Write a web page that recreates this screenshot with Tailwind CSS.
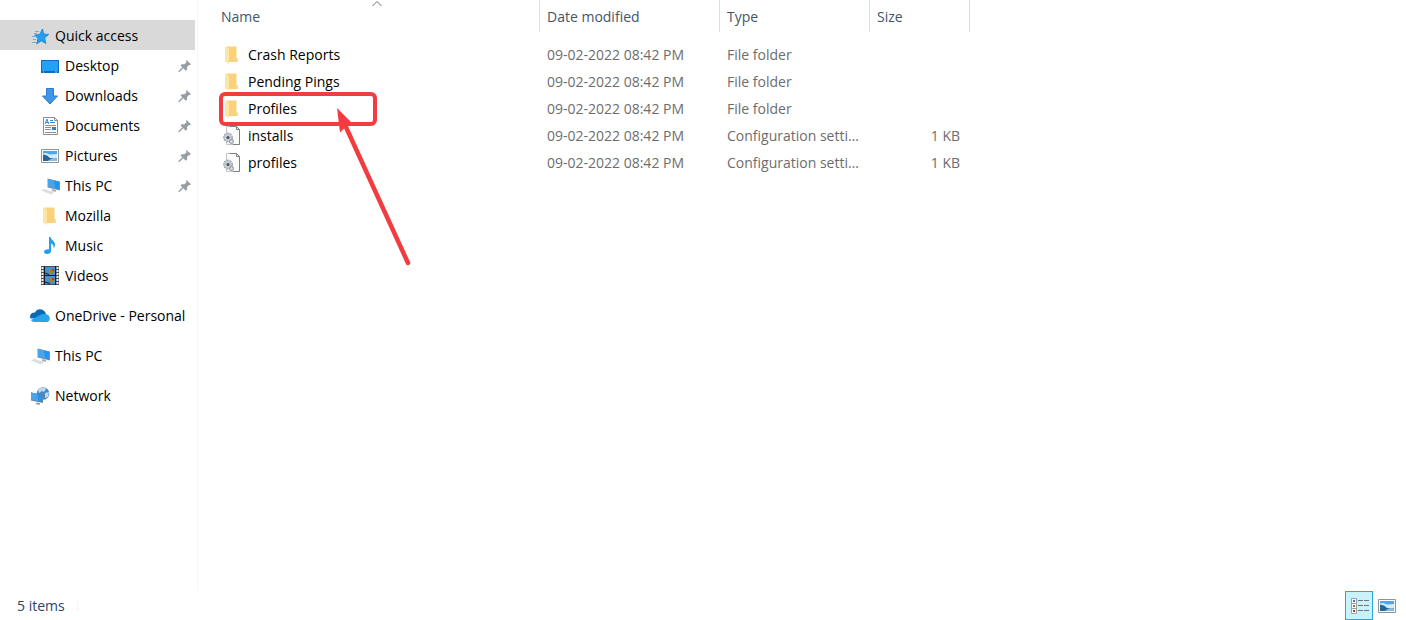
<!DOCTYPE html>
<html lang="en">
<head>
  <meta charset="UTF-8">
  <meta name="viewport" content="width=device-width, initial-scale=1.0">
  <title>File Explorer</title>
  <script src="https://cdn.jsdelivr.net/npm/@tailwindcss/browser@4"></script>
</head>
<body class="flex flex-col h-screen overflow-hidden bg-white text-black text-sm font-['Open_Sans','Noto_Sans',sans-serif]">

  <!-- Shared icons -->
  <svg class="hidden" aria-hidden="true">
    <symbol id="star" viewBox="0 0 20 20">
      <path d="M12.500 3l1.300 5 5 .4-4.200 3.500 1.300 5.600-4.600-2.600-4.700 3 1.400-5.300-3.300-3.600 4.900-.6z" fill="#259df0" stroke="#1878c4" stroke-width=".7"/>
      <path d="M5 5.500h4M4 7.500h3M2 10.500h3M3 13.500h3M2 16.500h4" stroke="#6db0e0"/>
    </symbol>
    <symbol id="desktop" viewBox="0 0 20 20">
      <path d="M1 4h18v13H1z" fill="#0f6cbd"/>
      <path d="M2 5h16v10H2z" fill="#22a2f4"/>
      <path d="M3 16h1M15 16h2" stroke="#9ad4fa"/>
    </symbol>
    <symbol id="download" viewBox="0 0 20 20">
      <path d="M6.500 2.500h7V10h4L10 18 2.500 10h4z" fill="#4095e6" stroke="#2b7cd0"/>
    </symbol>
    <symbol id="document" viewBox="0 0 20 20">
      <path d="M3.500 1.500h11l3 3v14h-14z" fill="#fff" stroke="#8b8f94"/>
      <path d="M14.500 1.500v3h3" fill="none" stroke="#8b8f94"/>
      <path d="M5 8l2-5 1.500 5M6 6.500h2.500M10 4.500h3M10 6.500h5" stroke="#3b8ad8" fill="none"/>
      <path d="M5 9.500h11M5 11.500h6M5 13.500h6M5 16.500h11" stroke="#8b8f94"/>
      <path d="M12 11h4v3h-4z" fill="#2f7fcc"/>
    </symbol>
    <symbol id="picture" viewBox="0 0 20 20">
      <path d="M1.500 3.500h17v13h-17z" fill="#fff" stroke="#8f9499"/>
      <path d="M3 5h14v10H3z" fill="#4ea6f0"/>
      <path d="M3 7.500l3-.5 4 1.500 7-.5v4H3z" fill="#d5ebf9"/>
      <path d="M3 8.500l4 1 3 2.500 7 1v2H3z" fill="#2b6596"/>
      <path d="M9 14l4-2 4 .5V15H8z" fill="#86bde2"/>
    </symbol>
    <symbol id="pc" viewBox="0 0 20 20">
      <path d="M7.500 2.500l12.500 3v9L7.500 11.500z" fill="#84919d"/>
      <path d="M8 3l11 2.700v7.500L8 10.500z" fill="#2196f0"/>
      <path d="M8 3l5.500 1.300 2 8L8 10.500z" fill="#4ba3ea"/>
      <path d="M12.500 13l4 1-1 2-4-1.200z" fill="#a9b1b8"/>
      <path d="M1 14.500l3-1.500 10 3-3 2.500z" fill="#d2d6d9"/>
      <path d="M2 15l9 2.500M3.500 14l8.500 2.500" stroke="#fff" stroke-width=".6" stroke-dasharray="1 1"/>
    </symbol>
    <symbol id="folder" viewBox="0 0 20 20">
      <path d="M4 1.500h10.500V13H16v4H7z" fill="#fad27c"/>
      <path d="M3 2h2.500l1.500 2V19l-4-2.500z" fill="#fde5a6"/>
      <path d="M14.500 13H16v4h-1.500z" fill="#fbdc96"/>
    </symbol>
    <symbol id="music" viewBox="0 0 20 20">
      <path d="M9 1h1.500c.5 3 4.500 4 4.500 7.500 0 1.500-.5 2.500-1.500 3.500.3-3-1-4-2.500-4.500v7.500c0 2-1.800 3-3.800 3C5.500 18 4 17.200 4 15.800 4 14 6.500 13 9 13.400z" fill="#229df0"/>
    </symbol>
    <symbol id="video" viewBox="0 0 20 20">
      <path d="M1 0h18v19H1z" fill="#4a4d57"/>
      <path d="M2.500 1v18M17.500 1v18" stroke="#f0f1f3" stroke-width="2" stroke-dasharray="2 1"/>
      <path d="M5 1h10v8H5zM5 10h10v8H5z" fill="#3f93dc"/>
      <path d="M9 4l2-1.500L14 3v3l-3 2-2-1zM9 13l2-1.500 3 .5v3l-3 2-2-1z" fill="#a88420"/>
      <path d="M12 3h2v2h-2zM12 12h2v2h-2z" fill="#c4352c"/>
      <path d="M4.500 0v19M15.500 0v19M5 9.500h10M5 7l4 1.500M5 16l5 1.500" stroke="#181a22"/>
    </symbol>
    <symbol id="cloud" viewBox="0 0 20 20">
      <path d="M.5 12.500C-1 8.500 2 6.500 5 6.500 7 2 14 2 16 8l-4 4z" fill="#0869b8"/>
      <path d="M1 14l9-5c2-1.300 4-1.300 6-.8C21 9 21 16 16.500 16H4.500c-2 0-3-1-3.500-2z" fill="#28a3ee"/>
    </symbol>
    <symbol id="network" viewBox="0 0 20 20">
      <circle cx="13" cy="7.500" r="6.300" fill="#4d87bf"/>
      <path d="M8 4c3-3 6-3 8-1l-2 3-2-1-3 2zM15 7l4-1-1 5-3 1z" fill="#bcd8ee"/>
      <path d="M1 6.500l12 2.500v8L1 14.500z" fill="#71808e"/>
      <path d="M1 6.500l11 2.500v7L1 13.500z" fill="#2196f0"/>
      <path d="M1 6.500l6 1.300 1.500 7.500L1 13.500z" fill="#4ba3ea"/>
      <path d="M7 16.500l3 .7-.5 1.800-4-1z" fill="#8796a4"/>
    </symbol>
    <symbol id="config" viewBox="0 0 20 20">
      <path d="M4.500.5h10l3 3v15h-13z" fill="#fbfbfa" stroke="#c3c5c7"/>
      <path d="M8 .5h6.500l3 3v15H11M14.500.5v3h3" fill="none" stroke="#7d8084"/>
      <circle cx="6" cy="11.500" r="4.200" fill="#c7ccd3" stroke="#a3abb5" stroke-width="1.600" stroke-dasharray="2 1"/>
      <circle cx="6" cy="11.500" r="3.300" fill="#c7ccd3"/>
      <circle cx="6" cy="11.500" r="1.500" fill="#4a5260"/>
      <circle cx="9.500" cy="15.500" r="2" fill="#d5d9de" stroke="#8b939d"/>
    </symbol>
    <symbol id="pin" viewBox="0 0 14 14">
      <path d="M8.500 1L13 5.200l-1 .9-1-.2-2 2.100.2 2.600-1.400 1.200L2.500 6.500l1.200-1.300 2.700.1L8.500 3.200 8 2z" fill="#979da3"/>
      <path d="M5 8.500L.8 12.800" stroke="#979da3" stroke-width="1.300"/>
    </symbol>
  </svg>

  <div class="flex flex-1 min-h-0">

    <!-- Navigation pane -->
    <nav class="w-[198px] shrink-0 pt-5 pr-0.5 border-r border-[#f8f6f0]">
      <a href="#" class="flex items-center gap-[5px] h-[30px] pl-[30px] pt-px bg-[#d9d9d9]"><svg class="size-5"><use href="#star"/></svg>Quick access</a>
      <ul class="mb-2.5">
        <li><a href="#" class="flex items-center gap-[5px] h-[30px] pt-px pl-10 pr-[3px]"><svg class="size-5"><use href="#desktop"/></svg>Desktop<svg class="size-3.5 ml-auto"><use href="#pin"/></svg></a></li>
        <li><a href="#" class="flex items-center gap-[5px] h-[30px] pt-px pl-10 pr-[3px]"><svg class="size-5"><use href="#download"/></svg>Downloads<svg class="size-3.5 ml-auto"><use href="#pin"/></svg></a></li>
        <li><a href="#" class="flex items-center gap-[5px] h-[30px] pt-px pl-10 pr-[3px]"><svg class="size-5"><use href="#document"/></svg>Documents<svg class="size-3.5 ml-auto"><use href="#pin"/></svg></a></li>
        <li><a href="#" class="flex items-center gap-[5px] h-[30px] pt-px pl-10 pr-[3px]"><svg class="size-5"><use href="#picture"/></svg>Pictures<svg class="size-3.5 ml-auto"><use href="#pin"/></svg></a></li>
        <li><a href="#" class="flex items-center gap-[5px] h-[30px] pt-px pl-10 pr-[3px]"><svg class="size-5"><use href="#pc"/></svg>This PC<svg class="size-3.5 ml-auto"><use href="#pin"/></svg></a></li>
        <li><a href="#" class="flex items-center gap-[5px] h-[30px] pt-px pl-10 pr-[3px]"><svg class="size-5"><use href="#folder"/></svg>Mozilla</a></li>
        <li><a href="#" class="flex items-center gap-[5px] h-[30px] pt-px pl-10 pr-[3px]"><svg class="size-5"><use href="#music"/></svg>Music</a></li>
        <li><a href="#" class="flex items-center gap-[5px] h-[30px] pt-px pl-10 pr-[3px]"><svg class="size-5"><use href="#video"/></svg>Videos</a></li>
      </ul>
      <div class="flex flex-col gap-2.5">
        <a href="#" class="flex items-center gap-[5px] h-[30px] pt-px pl-[30px] whitespace-nowrap"><svg class="size-5 shrink-0"><use href="#cloud"/></svg>OneDrive - Personal</a>
        <a href="#" class="flex items-center gap-[5px] h-[30px] pt-px pl-[30px]"><svg class="size-5"><use href="#pc"/></svg>This PC</a>
        <a href="#" class="flex items-center gap-[5px] h-[30px] pt-px pl-[30px]"><svg class="size-5"><use href="#network"/></svg>Network</a>
      </div>
    </nav>

    <!-- File list -->
    <main class="flex-1 min-w-0">
      <table class="table-fixed w-[772px] text-[#6d6d6d]">
        <thead class="text-[#43546b]">
          <tr>
            <th class="w-[342px] p-0 pb-[9px] font-normal">
              <button class="relative flex items-center w-full h-8 pt-0.5 pl-[23px] border-r border-[#dedede]">
                Name
                <svg class="absolute top-0 left-[173px] w-3 h-2" viewBox="0 0 12 8" fill="none" stroke="#6a7078"><path d="M1.500 6L6 1.500 10.500 6"/></svg>
              </button>
            </th>
            <th class="w-[180px] p-0 pb-[9px] font-normal"><button class="flex items-center w-full h-8 pt-0.5 pl-[7px] border-r border-[#dedede]">Date modified</button></th>
            <th class="w-[150px] p-0 pb-[9px] font-normal"><button class="flex items-center w-full h-8 pt-0.5 pl-[7px] border-r border-[#dedede]">Type</button></th>
            <th class="w-[100px] p-0 pb-[9px] font-normal"><button class="flex items-center w-full h-8 pt-0.5 pl-[7px] border-r border-[#dedede]">Size</button></th>
          </tr>
        </thead>
        <tbody>
          <tr class="h-[27px]">
            <td class="p-0 pl-6 text-black"><div class="flex items-center gap-1.5"><svg class="size-5"><use href="#folder"/></svg>Crash Reports</div></td>
            <td class="p-0 pl-[7px]">09-02-2022 08:42 PM</td>
            <td class="p-0 pl-[7px]">File folder</td>
            <td></td>
          </tr>
          <tr class="h-[27px]">
            <td class="p-0 pl-6 text-black"><div class="flex items-center gap-1.5"><svg class="size-5"><use href="#folder"/></svg>Pending Pings</div></td>
            <td class="p-0 pl-[7px]">09-02-2022 08:42 PM</td>
            <td class="p-0 pl-[7px]">File folder</td>
            <td></td>
          </tr>
          <tr class="h-[27px]">
            <td class="relative p-0 pl-6 text-black">
              <div class="flex items-center gap-1.5"><svg class="size-5"><use href="#folder"/></svg>Profiles</div>
              <!-- Red callout box and arrow -->
              <div class="absolute z-10 -top-[3px] left-[21px] w-[158px] h-[34px] border-4 border-[#f23c3f] rounded-md"></div>
              <svg class="absolute z-10 top-3 left-[138px] w-20 h-40" viewBox="0 0 80 160" fill="#f23c3f">
                <path d="M1 1l17 17-5 .5-4 2-5 5z"/>
                <path d="M9 18l63 138" stroke="#f23c3f" stroke-width="4.500" stroke-linecap="round"/>
              </svg>
            </td>
            <td class="p-0 pl-[7px]">09-02-2022 08:42 PM</td>
            <td class="p-0 pl-[7px]">File folder</td>
            <td></td>
          </tr>
          <tr class="h-[27px]">
            <td class="p-0 pl-6 text-black"><div class="flex items-center gap-1.5"><svg class="size-5"><use href="#config"/></svg>installs</div></td>
            <td class="p-0 pl-[7px]">09-02-2022 08:42 PM</td>
            <td class="p-0 pl-[7px] pr-2 truncate">Configuration settings</td>
            <td class="p-0 pr-2.5 text-right">1 KB</td>
          </tr>
          <tr class="h-[27px]">
            <td class="p-0 pl-6 text-black"><div class="flex items-center gap-1.5"><svg class="size-5"><use href="#config"/></svg>profiles</div></td>
            <td class="p-0 pl-[7px]">09-02-2022 08:42 PM</td>
            <td class="p-0 pl-[7px] pr-2 truncate">Configuration settings</td>
            <td class="p-0 pr-2.5 text-right">1 KB</td>
          </tr>
        </tbody>
      </table>
    </main>
  </div>

  <!-- Status bar -->
  <footer class="flex items-center h-[29px] pl-[17px] pr-[9px] text-[#2b4469]">
    <span class="pr-3 leading-3 border-r border-[#f8f6f0]">5 items</span>
    <div class="flex items-center gap-1 ml-auto">
      <button aria-label="Details view" class="w-7 h-[29px] bg-[#c9f3fb] border border-[#2ba5ea]">
        <svg class="w-[26px] h-[27px]" viewBox="0 0 26 27" fill="none">
          <path d="M5.500 6.500h5v5h-5zM5.500 11.500h5v5h-5zM5.500 16.500h5v5h-5z" fill="#fff" stroke="#9c9fa3"/>
          <path d="M7 8h2v2H7z" fill="#2f7fcc"/>
          <path d="M7 13h2v2H7z" fill="#8b7a22"/>
          <path d="M7 18h2v2H7z" fill="#b5401e"/>
          <path d="M12 8.500h5M18 8.500h5M12 13.500h5M18 13.500h5M12 18.500h5M18 18.500h5" stroke="#70757c"/>
        </svg>
      </button>
      <button aria-label="Large thumbnails"><svg class="size-5"><use href="#picture"/></svg></button>
    </div>
  </footer>

</body>
</html>
